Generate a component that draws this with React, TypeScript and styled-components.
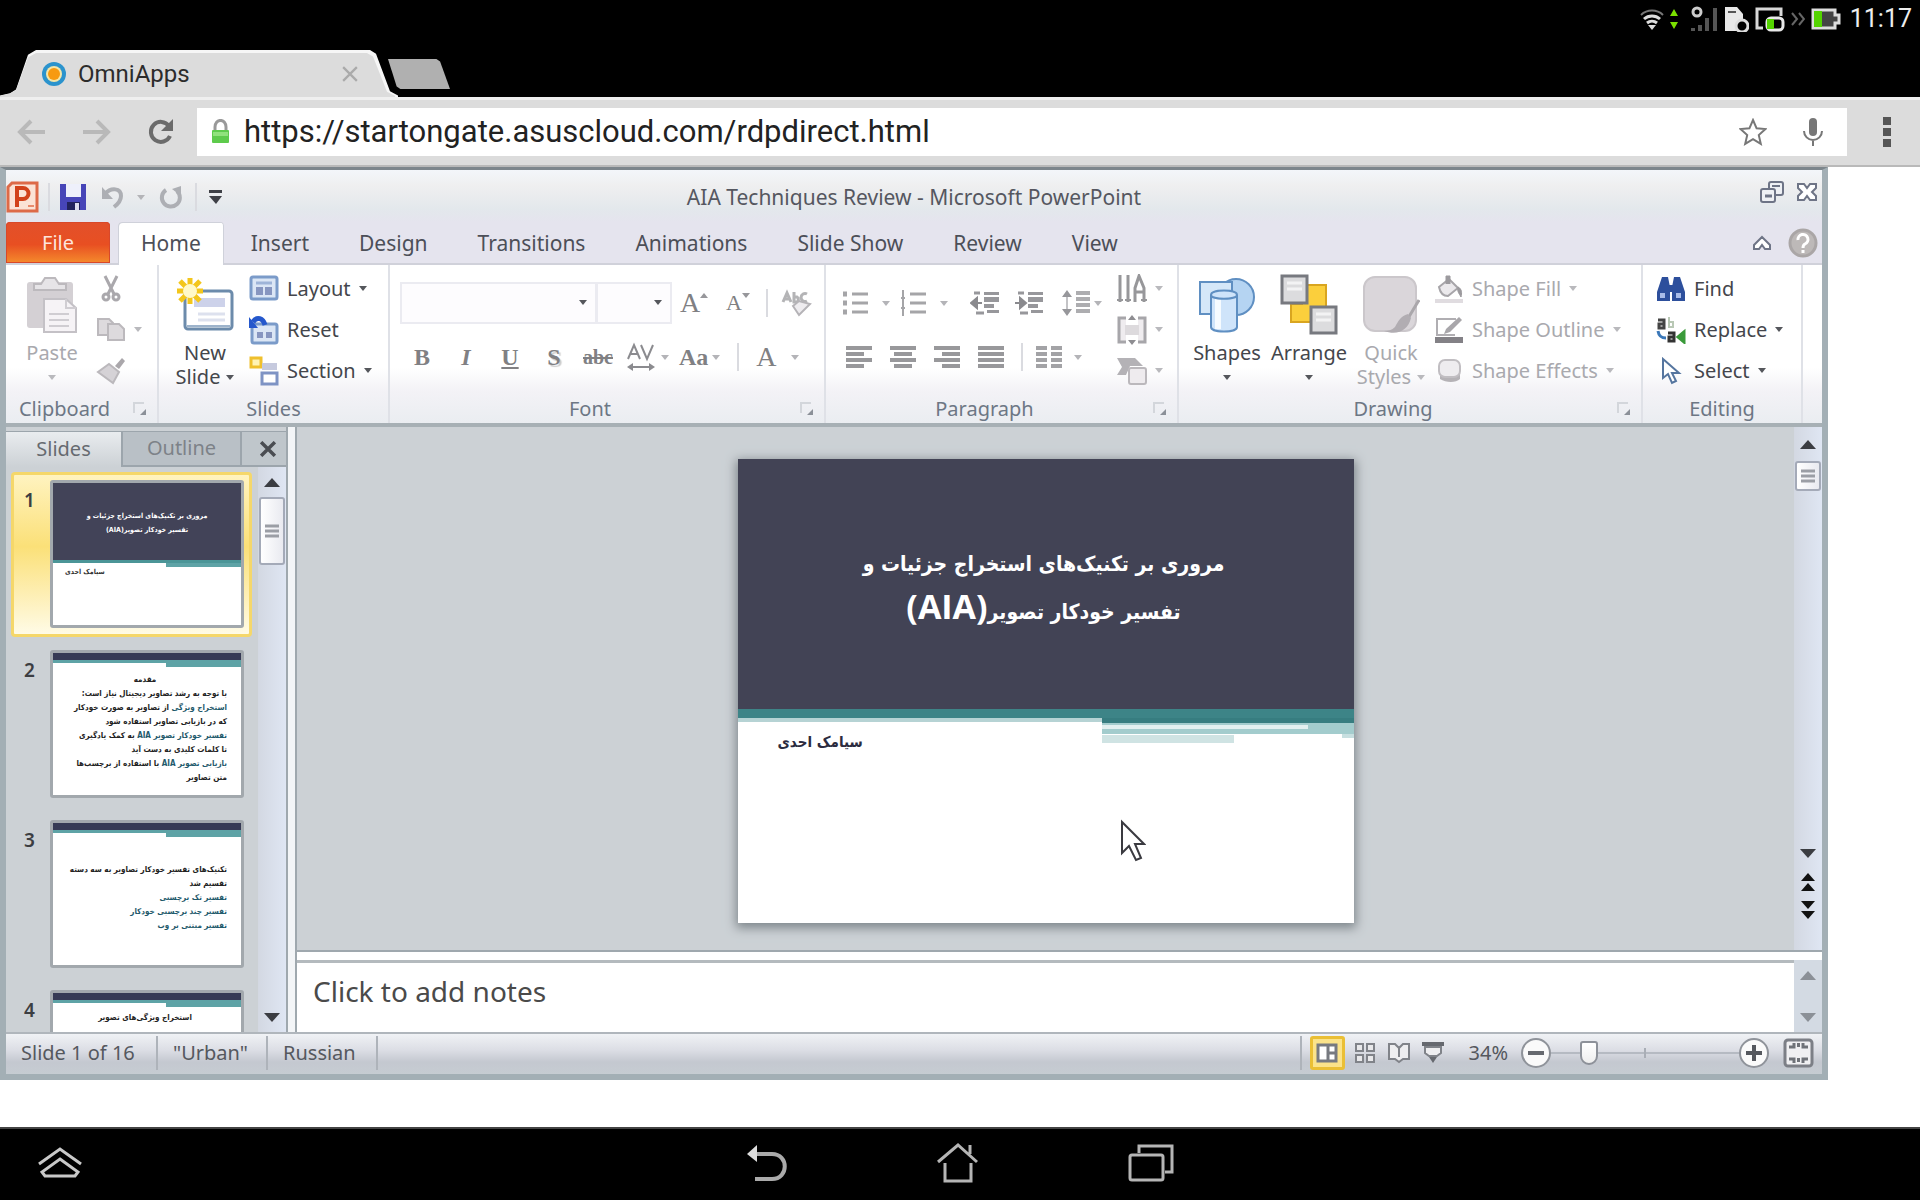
import React from "react";
import styled, { createGlobalStyle, css } from "styled-components";

const GlobalStyle = createGlobalStyle`
  *, *::before, *::after { box-sizing: border-box; }
  html, body { margin: 0; padding: 0; }
  body { background: #fff; font-family: "Noto Sans", "Open Sans", sans-serif; }
  button, input, select, textarea { font: inherit; color: inherit; margin: 0; padding: 0; border: 0; background: none; border-radius: 0; outline: none; }
  button { cursor: pointer; }
  svg { display: block; flex: none; }
`;

/* ---------- device frame ---------- */

const Screen = styled.div`
  height: 100vh;
  min-height: 900px;
  display: flex;
  flex-direction: column;
  background: #fff;
`;

const StatusBar = styled.div`
  height: 40px;
  flex: none;
  display: flex;
  justify-content: flex-end;
  align-items: center;
  gap: 6px;
  padding: 0 8px 2px 0;
  background: #000;
  color: #fff;
`;

const Signals = styled.div`
  display: flex;
  align-items: center;
  gap: 6px;
  margin-right: 6px;
`;

const Clock = styled.time`
  font: 400 25px/30px Roboto, sans-serif;
  color: #eee;
  margin-left: 2px;
`;

const TabStrip = styled.div`
  height: 57px;
  flex: none;
  display: flex;
  align-items: flex-end;
  background: #000;
`;

const tabShape = "polygon(0 100%, 0 97%, 10px 92%, 16px 84%, 28px 10%, 36px 0, calc(100% - 28px) 0, calc(100% - 22px) 8%, calc(100% - 8px) 88%, 100% 97%, 100% 100%)";

const BrowserTab = styled.div`
  position: relative;
  z-index: 0;
  width: 398px;
  height: 47px;
  display: flex;
  align-items: center;
  padding: 0 40px 0 42px;
  background: #f6f6f6;
  clip-path: ${tabShape};
  &::before {
    content: "";
    position: absolute;
    z-index: -1;
    inset: 3px 3px 0 0;
    background: #dcdcdc;
    clip-path: ${tabShape};
  }
`;

const TabTitle = styled.span`
  flex: 1;
  margin-left: 12px;
  font: 400 24px/28px Roboto, sans-serif;
  color: #2c2c2c;
`;

const PlainButton = styled.button`
  display: flex;
  align-items: center;
  justify-content: center;
`;

const NewTab = styled.button`
  width: 62px;
  height: 30px;
  margin: 0 0 8px -10px;
  background: #b0b0b0;
  clip-path: polygon(0 0, 78% 0, 84% 8%, 100% 100%, 20% 100%, 14% 92%);
`;

const BrowserBar = styled.div`
  height: 70px;
  flex: none;
  display: flex;
  align-items: center;
  gap: 36px;
  padding: 0 28px 2px 17px;
  background: #dcdcdc;
  border-top: 3px solid #efefef;
  border-bottom: 2px solid #b9b9b9;
`;

const NavButtons = styled.div`
  display: flex;
  gap: 36px;
`;

const UrlBox = styled.label`
  flex: 1;
  height: 48px;
  margin-left: -14px;
  padding: 0 20px 0 14px;
  display: flex;
  align-items: center;
  background: #fff;
`;

const UrlInput = styled.input`
  flex: 1;
  min-width: 0;
  margin-left: 14px;
  font: 400 31px/40px Roboto, sans-serif;
  color: #222;
`;

const UrlTools = styled.div`
  display: flex;
  gap: 32px;
`;

const Page = styled.main`
  flex: 1;
  min-height: 0;
  display: flex;
  padding: 0 92px 47px 0;
`;

const SystemNav = styled.nav`
  height: 73px;
  flex: none;
  display: grid;
  grid-template-columns: 1fr auto 1fr;
  align-items: center;
  padding: 0 36px 4px;
  background: #000;
  border-top: 2px solid #444;
`;

const SystemKeys = styled.div`
  display: flex;
  gap: 148px;
`;

/* ---------- office window ---------- */

const Office = styled.section`
  flex: 1;
  min-width: 0;
  display: flex;
  flex-direction: column;
  border: solid #a3afb5;
  border-width: 3px 6px 6px 6px;
  border-top-color: #7d868c;
  background: #ccd1d5;
  color: #4c4f58;
  font-size: 20px;
  line-height: 24px;
`;

const TitleBar = styled.header`
  height: 52px;
  flex: none;
  display: grid;
  grid-template-columns: 1fr auto 1fr;
  align-items: center;
  padding-top: 2px;
  background: linear-gradient(#f3f6fa, #efeff0 30%, #e3e8ec 75%, #e5e4ee);
`;

const QuickAccess = styled.div`
  display: flex;
  align-items: center;
  gap: 9px;
`;

const WindowTitle = styled.h1`
  margin: 0;
  font-size: 21px;
  font-weight: 400;
  line-height: 24px;
  color: #555760;
`;

const WindowButtons = styled.div`
  display: flex;
  justify-content: flex-end;
  align-items: center;
  gap: 12px;
  padding: 0 4px 10px 0;
`;

const TabRow = styled.div`
  height: 43px;
  flex: none;
  display: flex;
  gap: 4px;
  background: #e5e4ee;
  border-bottom: 2px solid #d0d1da;
`;

const FileTab = styled.button`
  width: 104px;
  height: 41px;
  margin-right: 4px;
  border-radius: 4px 4px 0 0;
  background: linear-gradient(#e2502b, #e84f22 55%, #f58b2c);
  box-shadow: inset 0 0 0 1px #d8482a;
  color: #fde5dc;
`;

const RibbonTab = styled.button<{ $active?: boolean }>`
  height: 43px;
  padding: 0 23px 2px;
  border-radius: 4px 4px 0 0;
  font-size: 21px;
  white-space: nowrap;
  ${(p) =>
    p.$active &&
    css`
      background: #fff;
      box-shadow: inset 1px 1px 0 #cfd1da, inset -1px 0 0 #cfd1da;
    `}
`;

const TabRowEnd = styled.div`
  margin-left: auto;
  display: flex;
  align-items: center;
  gap: 16px;
  padding-right: 4px;
`;

const Ribbon = styled.div`
  height: 162px;
  flex: none;
  display: flex;
  background: linear-gradient(#fff 0, #fff 65%, #f3f2f6 80%, #eaedf1);
  border-bottom: 4px solid #a7b0b5;
`;

const Group = styled.section<{ $w: number }>`
  flex: 0 0 ${(p) => p.$w}px;
  display: flex;
  flex-direction: column;
  border-right: 2px solid #dfe1e7;
`;

const GroupBody = styled.div<{ $left?: number }>`
  flex: 1;
  display: flex;
  align-items: flex-start;
  padding: 3px 0 0 ${(p) => p.$left ?? 0}px;
`;

const GroupFoot = styled.footer`
  height: 28px;
  display: flex;
  align-items: center;
  color: #6d7785;
  button { width: 34px; }
`;

const GroupName = styled.span`
  flex: 1;
  text-align: center;
  white-space: nowrap;
`;

const Big = styled.button<{ $w: number; $off?: boolean }>`
  width: ${(p) => p.$w}px;
  display: flex;
  flex-direction: column;
  align-items: center;
  color: ${(p) => (p.$off ? "#a9a9ae" : "#44464c")};
`;

const BigIcon = styled.span`
  height: 73px;
  display: flex;
  align-items: center;
`;

const BigLine = styled.span`
  height: 24px;
  display: flex;
  align-items: center;
  gap: 6px;
  white-space: nowrap;
`;

const Stack = styled.div<{ $left?: number }>`
  display: flex;
  flex-direction: column;
  padding-left: ${(p) => p.$left ?? 0}px;
`;

const Small = styled.button<{ $off?: boolean }>`
  height: 41px;
  display: flex;
  align-items: center;
  gap: 8px;
  white-space: nowrap;
  color: ${(p) => (p.$off ? "#a9a9ae" : "#44464c")};
`;

const SmallIcon = styled.span`
  width: 30px;
  display: flex;
  justify-content: center;
`;

const Rows = styled.div`
  padding-top: 8px;
`;

const ToolRow = styled.div`
  height: 54px;
  display: flex;
  align-items: center;
`;

const Tool = styled.button`
  width: 44px;
  height: 40px;
  display: flex;
  align-items: center;
  justify-content: center;
`;

const DropTool = styled.button<{ $gap?: number }>`
  height: 40px;
  padding: 0 5px;
  display: flex;
  align-items: center;
  gap: ${(p) => p.$gap ?? 4}px;
`;

const Rule = styled.span<{ $m?: number }>`
  width: 2px;
  height: 28px;
  margin: 0 ${(p) => p.$m ?? 6}px;
  background: #dadbe0;
`;

const IndentTools = styled.div`
  display: flex;
  margin: 0 6px 0 10px;
`;

const Raised = styled.span`
  align-self: flex-start;
  padding-top: 10px;
`;

const Picker = styled.label<{ $w: number }>`
  position: relative;
  width: ${(p) => p.$w}px;
  height: 42px;
  border: 2px solid #ebebf1;
  background: #fdfcfe;
  & + & { border-left-width: 1px; }
  select { width: 100%; height: 100%; appearance: none; }
  svg { position: absolute; right: 8px; top: 16px; pointer-events: none; }
`;

const Glyph = styled.span<{ $size?: number; $bold?: boolean; $italic?: boolean; $line?: string; $shadow?: boolean }>`
  font-family: "Liberation Serif", serif;
  font-size: ${(p) => p.$size ?? 24}px;
  line-height: 28px;
  font-weight: ${(p) => (p.$bold ? 700 : 400)};
  font-style: ${(p) => (p.$italic ? "italic" : "normal")};
  text-decoration: ${(p) => p.$line ?? "none"};
  text-shadow: ${(p) => (p.$shadow ? "2px 2px 1px #ccc" : "none")};
  color: #808083;
`;

/* ---------- work area ---------- */

const Work = styled.div`
  flex: 1;
  min-height: 0;
  display: flex;
`;

const SlidePane = styled.aside`
  flex: 0 0 280px;
  min-height: 0;
  display: flex;
  flex-direction: column;
  padding-top: 4px;
`;

const PaneTabs = styled.div`
  height: 36px;
  flex: none;
  display: flex;
`;

const PaneTab = styled.button<{ $on?: boolean; $w: number }>`
  width: ${(p) => p.$w}px;
  padding-bottom: 2px;
  color: ${(p) => (p.$on ? "#666a70" : "#7d8288")};
  background: ${(p) => (p.$on ? "linear-gradient(#e9ecef, #ccd1d5)" : "#b9c0c6")};
  border: solid #9ca5ac;
  border-width: ${(p) => (p.$on ? "1px 0 0 0" : "1px 0 2px 2px")};
`;

const PaneClose = styled.button`
  flex: 1;
  display: flex;
  align-items: center;
  justify-content: center;
  padding-left: 8px;
  background: #bfc6cb;
  border: solid #9ca5ac;
  border-width: 1px 0 2px 2px;
`;

const PaneBody = styled.div`
  flex: 1;
  min-height: 0;
  display: flex;
`;

const ThumbList = styled.ol`
  flex: 1;
  min-width: 0;
  min-height: 0;
  margin: 0;
  padding: 5px 6px 0 5px;
  list-style: none;
  overflow: hidden;
`;

const ThumbItem = styled.li<{ $on?: boolean }>`
  height: 165px;
  margin-bottom: 5px;
  padding: 8px 0 0 10px;
  display: flex;
  gap: 12px;
  border: 3px solid ${(p) => (p.$on ? "#f5d76a" : "transparent")};
  border-radius: 4px;
  background: ${(p) => (p.$on ? "linear-gradient(#fff3c0, #fbe078 45%, #fffbe6)" : "none")};
`;

const ThumbNumber = styled.span`
  flex: 0 0 14px;
  padding-top: 5px;
  font-size: 19px;
  font-weight: 600;
  color: #3c3e42;
`;

const Mini = styled.div`
  flex: 0 0 194px;
  height: 148px;
  margin-top: -3px;
  background: #fff;
  border: 3px solid #a2a8ad;
  border-radius: 3px;
  overflow: hidden;
  font-family: "DejaVu Sans Condensed", "DejaVu Sans", sans-serif;
`;

const MiniCover = styled.div`
  height: 80px;
  padding-top: 26px;
  background: #424358;
  border-bottom: 3px solid #4b9597;
  color: #fff;
  text-align: center;
  font-size: 7px;
  font-weight: 700;
  line-height: 14px;
`;

const MiniBar = styled.div`
  height: 10px;
  background: #363a55;
  border-bottom: 3px solid #5ea3a6;
`;

const MiniAccent = styled.div`
  width: 40%;
  height: 4px;
  margin-left: auto;
  background: #5ea3a6;
`;

const MiniName = styled.p`
  margin: 0 0 0 12px;
  font-size: 7px;
  font-weight: 700;
  line-height: 10px;
  color: #333;
`;

const MiniText = styled.div<{ $top: number }>`
  padding: ${(p) => p.$top}px 14px 0 10px;
  font-size: 8px;
  font-weight: 700;
  line-height: 14px;
  color: #222;
  white-space: nowrap;
  p { margin: 0; }
  b { color: #1f5a6c; }
`;

const MiniTitle = styled.p`
  text-align: center;
`;

const Scroll = styled.div`
  flex: 0 0 28px;
  display: flex;
  flex-direction: column;
  align-items: center;
  background: linear-gradient(90deg, #d3d8e2, #dfe6f3);
`;

const ScrollButton = styled.button<{ $h?: number }>`
  width: 100%;
  height: ${(p) => p.$h ?? 30}px;
  flex: none;
  display: flex;
  align-items: center;
  justify-content: center;
`;

const ScrollThumb = styled.div<{ $h: number }>`
  width: 26px;
  height: ${(p) => p.$h}px;
  display: flex;
  align-items: center;
  justify-content: center;
  border: 2px solid #a4aab8;
  border-radius: 3px;
  background: linear-gradient(90deg, #fff, #e9eaf0);
`;

const Spacer = styled.div`
  flex: 1;
`;

const Splitter = styled.div`
  flex: 0 0 11px;
  background: #f3f5f7;
  border: solid #9fa8ae;
  border-width: 0 2px 0 2px;
`;

const Main = styled.div`
  flex: 1;
  min-width: 0;
  display: flex;
  flex-direction: column;
`;

const Stage = styled.div`
  flex: 1;
  min-height: 0;
  display: flex;
`;

const Canvas = styled.div`
  flex: 1;
  display: flex;
  align-items: center;
  justify-content: center;
  padding-top: 4px;
`;

const Slide = styled.article`
  position: relative;
  width: 616px;
  height: 464px;
  background: #fff;
  box-shadow: 0 3px 10px 2px #7f878c;
`;

const Cover = styled.div`
  height: 250px;
  padding-top: 84px;
  background: #424355;
  text-align: center;
`;

const CoverTitle = styled.h2`
  margin: 0;
  padding-right: 4px;
  font: 700 21px/42px "DejaVu Sans Condensed", "DejaVu Sans", sans-serif;
  color: #fff;
  span { font: 700 34px/42px "Open Sans", sans-serif; }
`;

const Bands = styled.svg`
  width: 100%;
  height: 34px;
`;

const Author = styled.p`
  margin: -11px 0 0 40px;
  width: fit-content;
  font: 700 15px/20px "DejaVu Sans Condensed", "DejaVu Sans", sans-serif;
  color: #2c2c40;
`;

const Pointer = styled.svg`
  position: absolute;
  left: 382px;
  top: 360px;
`;

const Notes = styled.div`
  height: 82px;
  flex: none;
  display: flex;
  border-top: 2px solid #9fa8ae;
  background: #fff;
`;

const NotesBox = styled.textarea`
  flex: 1;
  height: 72px;
  margin-top: 8px;
  padding: 10px 16px;
  border-top: 3px solid #b4babe;
  resize: none;
  font: 400 28px/36px "Noto Sans", sans-serif;
  color: #4a4a4a;
  &::placeholder { color: #4a4a4a; opacity: 1; }
`;

const NotesScroll = styled(Scroll)`
  margin-top: 8px;
  justify-content: space-between;
  background: #d3dae3;
`;

const Foot = styled.footer`
  height: 42px;
  flex: none;
  display: flex;
  align-items: center;
  padding-bottom: 2px;
  border-top: 2px solid #b0b6bc;
  background: linear-gradient(#f0f2f5, #dcdee5 40%, #c4c8d0 70%, #c6ccd2);
  color: #55585e;
`;

const FootCell = styled.span<{ $w: number }>`
  width: ${(p) => p.$w}px;
  height: 34px;
  padding-left: 15px;
  display: flex;
  align-items: center;
  border-right: 2px solid #aeb3ba;
  white-space: nowrap;
`;

const ViewTools = styled.div`
  margin-left: auto;
  display: flex;
  align-items: center;
  gap: 6px;
  padding: 0 8px 0 8px;
  border-left: 2px solid #aeb3ba;
`;

const ViewButton = styled.button<{ $on?: boolean }>`
  width: ${(p) => (p.$on ? 35 : 28)}px;
  height: 34px;
  display: flex;
  align-items: center;
  justify-content: center;
  border-radius: 3px;
  ${(p) => p.$on && css`background: #fbe38a; border: 3px solid #eabf35;`}
`;

const ZoomLabel = styled.label`
  margin-left: 16px;
`;

const ZoomRange = styled.input`
  width: 188px;
  height: 30px;
  appearance: none;
  background:
    linear-gradient(#a9aeb6, #a9aeb6) center / 2px 10px no-repeat,
    linear-gradient(#b5bac2, #b5bac2) center / 100% 2px no-repeat;
  &::-webkit-slider-thumb {
    appearance: none;
    width: 18px;
    height: 24px;
    background: linear-gradient(#fff, #eee);
    border: 2px solid #8d9199;
    border-radius: 3px 3px 9px 9px;
  }
`;

const RoundButton = styled.button`
  width: 30px;
  height: 30px;
  display: flex;
  align-items: center;
  justify-content: center;
  border: 2px solid #8f939a;
  border-radius: 50%;
  background: #fafafa;
`;

const ZoomGroup = styled.div`
  display: flex;
  align-items: center;
  margin-left: 7px;
`;

const FitButton = styled(PlainButton)`
  margin-left: 14px;
`;

/* ---------- drawings ---------- */

const Caret = ({ c = "#55575c", up }: { c?: string; up?: boolean }) => (
  <svg width="8" height="5" viewBox="0 0 8 5"><path d={up ? "M0 5h8L4 0z" : "M0 0h8L4 5z"} fill={c} /></svg>
);

const Arrow = ({ down, c = "#3b3d42" }: { down?: boolean; c?: string }) => (
  <svg width="16" height="9" viewBox="0 0 16 9"><path d={down ? "M0 0h16L8 9z" : "M0 9h16L8 0z"} fill={c} /></svg>
);

const DoubleArrow = ({ down }: { down?: boolean }) => (
  <svg width="14" height="18" viewBox="0 0 14 18">
    <path d={down ? "M0 0h14L7 8zM0 10h14L7 18z" : "M0 18h14L7 10zM0 8h14L7 0z"} fill="#111" />
  </svg>
);

const Grip = () => (
  <svg width="14" height="14" viewBox="0 0 14 14"><path d="M0 2h14M0 7h14M0 12h14" stroke="#9b9ea5" strokeWidth="3" /></svg>
);

const Launcher = () => (
  <svg width="14" height="14" viewBox="0 0 14 14">
    <path d="M1 11V1h10" fill="none" stroke="#d3d6db" strokeWidth="2" />
    <path d="M13 7v6H7z" fill="#8b9098" />
  </svg>
);

const SystemIcons = () => (
  <>
    <Signals>
      <svg width="24" height="24" viewBox="0 0 24 24" fill="none" stroke="#ddd">
        <path d="M1 8a16 16 0 0 1 22 0" stroke="#777" strokeWidth="2" />
        <path d="M4 12a12 12 0 0 1 16 0M7 16a8 8 0 0 1 10 0" strokeWidth="3" />
        <path d="M8 18h8l-4 5z" fill="#ddd" stroke="none" />
      </svg>
      <svg width="8" height="22" viewBox="0 0 8 22" fill="#7be000"><path d="M0 8l4-7 4 7zM0 14h8l-4 7z" /></svg>
    </Signals>
    <svg width="28" height="26" viewBox="0 0 28 26">
      <circle cx="7" cy="6" r="4" fill="none" stroke="#ccc" strokeWidth="3" />
      <path d="M3 25v-3M10 25v-6M17 25V12M25 25V2" stroke="#555" strokeWidth="4" />
    </svg>
    <svg width="25" height="26" viewBox="0 0 25 26">
      <path d="M1 1h12l6 7v17H1z" fill="#e8e8e8" />
      <path d="M4 6h8" stroke="#555" strokeWidth="2" />
      <circle cx="18" cy="20" r="6" fill="#000" stroke="#ddd" strokeWidth="3" />
    </svg>
    <svg width="30" height="26" viewBox="0 0 30 26" fill="none">
      <path d="M8 22H2V3h24v7" stroke="#d8d8d8" strokeWidth="3" />
      <rect x="12" y="12" width="16" height="12" rx="4" stroke="#e8e8e8" strokeWidth="3" />
      <path d="M12 13h7v10h-7z" fill="#54d400" />
    </svg>
    <svg width="14" height="14" viewBox="0 0 14 14" fill="none" stroke="#666" strokeWidth="2"><path d="M1 1l5 6-5 6M8 1l5 6-5 6" /></svg>
    <svg width="31" height="22" viewBox="0 0 31 22">
      <path d="M2 2h22v5h4v8h-4v5H2z" fill="#444" stroke="#ddd" strokeWidth="3" />
      <path d="M3 3h8v16H3z" fill="#54d400" />
    </svg>
  </>
);

const Favicon = () => (
  <svg width="24" height="24" viewBox="0 0 24 24">
    <circle cx="12" cy="12" r="12" fill="#2b93cd" />
    <circle cx="12" cy="12" r="8" fill="#f4e6a8" />
    <circle cx="12" cy="12" r="6" fill="#f79a10" />
  </svg>
);

const Cross = ({ s = 14, c = "#999", w = 2 }: { s?: number; c?: string; w?: number }) => (
  <svg width={s} height={s} viewBox="0 0 14 14"><path d="M1 1l12 12M13 1L1 13" stroke={c} strokeWidth={w} /></svg>
);

const NavArrow = ({ right }: { right?: boolean }) => (
  <svg width="29" height="26" viewBox="0 0 29 26" fill="none" stroke="#b9b9b9" strokeWidth="4">
    <path d={right ? "M1 13h25M15 2l11 11-11 11" : "M28 13H3M14 2L3 13l11 11"} />
  </svg>
);

const Reload = () => (
  <svg width="28" height="28" viewBox="0 0 28 28">
    <path d="M22 8a10 10 0 1 0 1 10" fill="none" stroke="#6b6b6b" strokeWidth="4" />
    <path d="M26 1v12H14z" fill="#6b6b6b" />
  </svg>
);

const Lock = () => (
  <svg width="19" height="25" viewBox="0 0 19 25">
    <path d="M4 12V8a5 6 0 0 1 11 0v4" fill="none" stroke="#999" strokeWidth="3" />
    <rect x="1" y="11" width="17" height="13" rx="1" fill="#5ecb4c" />
    <path d="M2 13h15v4H2z" fill="#90e27c" />
  </svg>
);

const Star = () => (
  <svg width="28" height="28" viewBox="0 0 28 28">
    <path d="M14 2l3.600 8.300 8.900.8-6.700 6 2 8.800-7.800-4.700-7.800 4.700 2-8.800-6.700-6 8.900-.8z" fill="none" stroke="#777" strokeWidth="2" />
  </svg>
);

const Mic = () => (
  <svg width="28" height="28" viewBox="0 0 28 28">
    <rect x="10" y="0" width="8" height="18" rx="4" fill="#777" />
    <path d="M5 13a9 9 0 0 0 18 0M14 22v6" fill="none" stroke="#777" strokeWidth="2" />
  </svg>
);

const Dots = () => (
  <svg width="9" height="32" viewBox="0 0 9 32" fill="#555"><path d="M0 1h8v8H0zM0 12h8v8H0zM0 23h8v8H0z" /></svg>
);

const PptLogo = () => (
  <svg width="33" height="32" viewBox="0 0 33 32">
    <path d="M6 2h25v28H2V6z" fill="#fbe3d6" stroke="#dd6a48" strokeWidth="3" />
    <path d="M11 26V7h6a5 5 0 0 1 0 11h-5" fill="none" stroke="#d2421a" strokeWidth="4" />
    <path d="M22 25h6" stroke="#e88b6d" strokeWidth="2" />
  </svg>
);

const Save = () => (
  <svg width="28" height="28" viewBox="0 0 28 28">
    <path d="M1 1h26v26H1z" fill="#4745b8" />
    <path d="M7 1h15v13H7z" fill="#eef0fb" />
    <path d="M8 19h13v8H8z" fill="#22225c" /><path d="M16 20h4v7h-4z" fill="#dde" />
  </svg>
);

const Undo = () => (
  <svg width="24" height="24" viewBox="0 0 24 24">
    <path d="M4 9C10 2 20 3 20 11c0 5-3 8-7 11" fill="none" stroke="#adafb4" strokeWidth="4" />
    <path d="M1 2v12h11z" fill="#adafb4" />
  </svg>
);

const Redo = () => (
  <svg width="24" height="24" viewBox="0 0 24 24">
    <path d="M7 5a9 9 0 1 0 11 1" fill="none" stroke="#adafb4" strokeWidth="4" />
    <path d="M22 1v10l-9-7z" fill="#adafb4" />
  </svg>
);

const Customize = () => (
  <svg width="13" height="14" viewBox="0 0 13 14"><path d="M0 0h13v3H0zM0 6h13l-6 8z" fill="#3e4046" /></svg>
);

const Restore = () => (
  <svg width="24" height="22" viewBox="0 0 24 22" fill="#eef0f4" stroke="#6e7486" strokeWidth="2">
    <rect x="9" y="1" width="14" height="13" rx="2" /><path d="M12 5h8" />
    <rect x="1" y="8" width="14" height="13" rx="2" /><path d="M5 15h7" strokeWidth="3" />
  </svg>
);

const CloseBox = () => (
  <svg width="22" height="20" viewBox="0 0 22 20">
    <path d="M2 2h6l3 4 3-4h6v4l-4 4 4 4v4h-6l-3-4-3 4H2v-4l4-4-4-4z" fill="#fff" stroke="#6e7486" strokeWidth="2" />
  </svg>
);

const Collapse = () => (
  <svg width="20" height="16" viewBox="0 0 20 16">
    <path d="M10 2l8 8v4h-5l-3-4-3 4H2v-4z" fill="#fff" stroke="#6e7486" strokeWidth="2" />
  </svg>
);

const Help = () => (
  <svg width="30" height="30" viewBox="0 0 30 30">
    <circle cx="15" cy="15" r="13" fill="#bdb9b8" stroke="#aaa6a6" strokeWidth="3" />
    <path d="M10 12a5 5 0 1 1 7 4c-2 1-2 2-2 4M15 22v3" fill="none" stroke="#fff" strokeWidth="3" />
  </svg>
);

const PasteIcon = () => (
  <svg width="52" height="58" viewBox="0 0 52 58">
    <rect x="1" y="6" width="46" height="46" rx="3" fill="#d4d0d4" />
    <path d="M8 8h7l4-6h10l4 6h7v6H8z" fill="#e6e4e7" stroke="#bcb9bd" strokeWidth="2" />
    <path d="M18 23h22l10 9v24H18z" fill="#f6f3f6" stroke="#c4c1c6" strokeWidth="2" />
    <path d="M40 23v9h10M23 38h20M23 44h20M23 50h20" fill="none" stroke="#d0cdd2" strokeWidth="2" />
  </svg>
);

const Cut = () => (
  <svg width="20" height="28" viewBox="0 0 20 28" fill="none" stroke="#aaa8ac" strokeWidth="3">
    <path d="M4 1l9 18M16 1L7 19" /><circle cx="5" cy="22" r="3" /><circle cx="15" cy="22" r="3" />
  </svg>
);

const Copy = () => (
  <svg width="30" height="25" viewBox="0 0 30 25" fill="#dddadd" stroke="#bcb9bd" strokeWidth="2">
    <path d="M2 2h11l4 4v12H2z" /><path d="M12 7h11l5 5v11H12z" />
  </svg>
);

const Brush = () => (
  <svg width="30" height="28" viewBox="0 0 30 28">
    <path d="M19 9l7-8 3 3-6 8z" fill="#aaa7ab" /><path d="M13 7l10 8-6 11L2 15z" fill="#d5d2d6" stroke="#bbb8bc" strokeWidth="2" />
  </svg>
);

const NewSlideIcon = () => (
  <svg width="58" height="54" viewBox="0 0 58 54">
    <rect x="9" y="13" width="47" height="38" rx="3" fill="#fff" stroke="#6c8bab" strokeWidth="3" />
    <path d="M18 20h31v9H18z" fill="#cdd2ea" /><path d="M22 36h27M22 42h27" stroke="#dde1ee" strokeWidth="3" />
    <path d="M11 48h43" stroke="#9db3cb" strokeWidth="2" />
    <path d="M14 0v26M1 13h26M4 3l20 20M24 3L4 23" stroke="#f3c61c" strokeWidth="5" />
    <circle cx="14" cy="13" r="7" fill="#fff9c8" />
  </svg>
);

const LayoutIcon = () => (
  <svg width="30" height="28" viewBox="0 0 30 28">
    <rect x="2" y="2" width="26" height="22" rx="2" fill="#dbe6f5" stroke="#7b9bc9" strokeWidth="3" />
    <path d="M7 8h16" stroke="#9eb4d8" strokeWidth="3" /><path d="M7 12h7v8H7zM16 12h7v8h-7z" fill="#8796c0" />
  </svg>
);

const ResetIcon = () => (
  <svg width="30" height="30" viewBox="0 0 30 30">
    <rect x="3" y="9" width="25" height="19" rx="2" fill="#dbe6f5" stroke="#7b9bc9" strokeWidth="3" />
    <path d="M8 17h6v6H8zM17 17h6v6h-6z" fill="#8796c0" />
    <path d="M4 7C8 1 14 3 16 10" fill="none" stroke="#2558cc" strokeWidth="5" /><path d="M0 2v11h9z" fill="#2558cc" />
  </svg>
);

const SectionIcon = () => (
  <svg width="30" height="30" viewBox="0 0 30 30">
    <rect x="2" y="2" width="10" height="9" fill="#fff3b4" stroke="#efc02d" strokeWidth="3" />
    <rect x="13" y="7" width="15" height="7" fill="#c6cade" /><rect x="13" y="17" width="15" height="11" fill="#fff" stroke="#7e93c4" strokeWidth="3" />
  </svg>
);

const ClearFormat = () => (
  <svg width="32" height="28" viewBox="0 0 32 28">
    <path d="M3 13l4-9 4 9M5 10h4M14 3v10h3a3 3 0 0 0 0-5h-3M27 5a4 4 0 1 0 0 7" fill="none" stroke="#b4b4b6" strokeWidth="3" />
    <path d="M13 17l6-5 11 3-11 11z" fill="#eeecef" stroke="#b5b3b7" strokeWidth="2" />
  </svg>
);

const SpacingIcon = () => (
  <svg width="32" height="30" viewBox="0 0 32 30" fill="none" stroke="#8b8b8f">
    <path d="M3 17l6-14 6 14M6 12h6M16 3l6 14 6-14" strokeWidth="2" />
    <path d="M4 25h24" strokeWidth="2" /><path d="M8 21l-6 4 6 4zM24 21l6 4-6 4z" fill="#8b8b8f" stroke="none" />
  </svg>
);

const ListIcon = ({ numbered }: { numbered?: boolean }) => (
  <svg width="26" height="26" viewBox="0 0 26 26" stroke="#a5a5a8" strokeWidth="3">
    <path d="M10 4h16M10 13h16M10 22h16" />
    <path d={numbered ? "M3 0v26M1 8h4M1 18h4" : "M1 4h4M1 13h4M1 22h4"} strokeWidth={numbered ? 2 : 5} fill="none" />
  </svg>
);

const IndentIcon = ({ out }: { out?: boolean }) => (
  <svg width="30" height="26" viewBox="0 0 30 26">
    <path d="M4 3h6M6 23h8" stroke="#97979b" strokeWidth="3" />
    <path d="M14 2h15v3H14zM14 7h15v5H14zM14 14h10v4H14zM17 20h12v3H17z" fill="#97979b" />
    <path d={out ? "M1 13l6-5v10zM7 13h5" : "M12 13L6 8v10zM1 13h6"} fill="#8a8a8e" stroke="#8a8a8e" strokeWidth="2" />
  </svg>
);

const LineSpacing = () => (
  <svg width="28" height="28" viewBox="0 0 28 28">
    <path d="M0 8l5-7 5 7zM0 20l5 7 5-7z" fill="#97979b" /><path d="M5 8v12" stroke="#c3c3c6" strokeWidth="2" />
    <path d="M14 4h14M14 10h14M14 16h14M14 22h14" stroke="#adadb0" strokeWidth="4" />
  </svg>
);

const widths: Record<string, [number, number][]> = {
  left: [[0, 26], [0, 18], [0, 26], [0, 18]],
  center: [[0, 26], [4, 22], [0, 26], [4, 22]],
  right: [[0, 26], [8, 26], [0, 26], [8, 26]],
  justify: [[0, 26], [0, 26], [0, 26], [0, 26]],
};

const AlignIcon = ({ kind }: { kind: string }) => (
  <svg width="26" height="24" viewBox="0 0 26 24" stroke="#98989b" strokeWidth="4">
    {widths[kind].map(([a, b], i) => <path key={i} d={`M${a} ${3 + i * 6}H${b}`} />)}
  </svg>
);

const Columns = () => (
  <svg width="26" height="24" viewBox="0 0 26 24" stroke="#a3a3a6" strokeWidth="4">
    <path d="M0 3h11M0 9h11M0 15h11M0 21h11M15 3h11M15 9h11M15 15h11M15 21h11" />
  </svg>
);

const TextDirection = () => (
  <svg width="30" height="30" viewBox="0 0 30 30" fill="none" stroke="#97979a" strokeWidth="3">
    <path d="M3 1v27M11 1v27M18 28V14l4-12 5 12v14M18 18h9" /><path d="M0 26h6M8 26h6M24 26h6" strokeWidth="2" />
  </svg>
);

const AlignText = () => (
  <svg width="30" height="30" viewBox="0 0 30 30">
    <path d="M9 3H2v24h7M21 3h7v24h-7" fill="#efecef" stroke="#a7a6aa" strokeWidth="3" />
    <path d="M8 10h14v10H8z" fill="#dddadd" /><path d="M11 5l4-5 4 5zM11 25l4 5 4-5z" fill="#8e8d91" />
  </svg>
);

const SmartArt = () => (
  <svg width="30" height="30" viewBox="0 0 30 30">
    <path d="M0 2h18l8 8H13l-4 9H0l5-8z" fill="#b4b2b6" /><rect x="12" y="12" width="17" height="16" rx="2" fill="#eeebee" stroke="#bbb8bc" strokeWidth="2" />
  </svg>
);

const ShapesIcon = () => (
  <svg width="58" height="58" viewBox="0 0 58 58" stroke="#5f8fc2" strokeWidth="2">
    <circle cx="38" cy="21" r="18" fill="#b5d4f2" /><rect x="2" y="6" width="32" height="32" fill="#d5e7f8" />
    <path d="M13 19c0-6 26-6 26 0v32c0 6-26 6-26 0z" fill="#cfe4fa" />
    <path d="M20 22v31" stroke="#f6fbff" strokeWidth="6" /><path d="M13 19c0 5 26 5 26 0" fill="none" />
  </svg>
);

const ArrangeIcon = () => (
  <svg width="58" height="62" viewBox="0 0 58 62">
    <path d="M22 11h24v23H34v14H11V30h11z" fill="#fbcf3c" stroke="#d9a520" strokeWidth="2" />
    <rect x="2" y="2" width="25" height="27" fill="#dcdcde" stroke="#77797f" strokeWidth="3" /><rect x="31" y="33" width="25" height="26" fill="#dcdcde" stroke="#77797f" strokeWidth="3" />
    <path d="M7 9h15M7 15h15M36 40h15M36 46h15" stroke="#f3f3f4" strokeWidth="3" />
  </svg>
);

const QuickIcon = () => (
  <svg width="58" height="58" viewBox="0 0 58 58">
    <rect x="2" y="1" width="52" height="54" rx="11" fill="#dad6da" stroke="#cbc7cb" strokeWidth="2" />
    <path d="M57 24L45 44" stroke="#aaa7ab" strokeWidth="3" /><path d="M46 38c-8 2-10 8-13 13-3 3-7 4-11 4 14 5 24-1 27-13z" fill="#b1adb2" />
  </svg>
);

const FillIcon = () => (
  <svg width="30" height="28" viewBox="0 0 30 28">
    <path d="M5 12L15 4l9 9-10 8c-5 0-8-4-9-9z" fill="#ebe9ec" stroke="#a7a5a9" strokeWidth="2" />
    <path d="M12 9V1h4v8M24 12c4 2 4 6 3 10-2-4-4-5-3-10z" fill="#9c9a9e" stroke="#9c9a9e" /><path d="M1 26h28" stroke="#e0dce0" strokeWidth="4" />
  </svg>
);

const OutlineIcon = () => (
  <svg width="30" height="28" viewBox="0 0 30 28">
    <path d="M22 3H3v16h18" fill="none" stroke="#b0aeb2" strokeWidth="2" /><path d="M10 18l2-5L25 1l3 3-12 12z" fill="#a8a6aa" />
    <path d="M1 24h28" stroke="#838186" strokeWidth="6" />
  </svg>
);

const EffectsIcon = () => (
  <svg width="30" height="26" viewBox="0 0 30 26">
    <path d="M6 12h20v9c-4 4-14 4-20 0z" fill="#b5b2b6" /><rect x="5" y="2" width="21" height="17" rx="6" fill="#eeecef" stroke="#c1bec2" strokeWidth="2" />
  </svg>
);

const FindIcon = () => (
  <svg width="30" height="26" viewBox="0 0 30 26" fill="#2d4f9c">
    <path d="M6 1h6l2 10v14H1V16zM18 1h6l5 15v9H16V11z" /><path d="M12 9h6v7h-6z" /><path d="M4 17h5v5H4zM20 17h5v5h-5z" fill="#a9bce8" />
  </svg>
);

const ReplaceIcon = () => (
  <svg width="30" height="28" viewBox="0 0 30 28" fill="none" strokeWidth="3">
    <path d="M2 4h6v8H3V8h5" stroke="#444" /><path d="M13 1v10h4V6h-4" stroke="#b9c8b5" strokeWidth="2" />
    <path d="M2 15c1 6 4 7 8 7" stroke="#3a77b8" /><path d="M12 17h6v8h-5v-4h5" stroke="#333" /><path d="M28 16l-6 5 6 5z" fill="#3a9a3a" stroke="#3a9a3a" />
  </svg>
);

const SelectIcon = () => (
  <svg width="22" height="28" viewBox="0 0 22 28"><path d="M3 2v19l5-4 4 9 4-2-4-8h7z" fill="#fff" stroke="#55759f" strokeWidth="2" /></svg>
);

const BandArt = () => (
  <Bands viewBox="0 0 616 34" preserveAspectRatio="none" aria-hidden="true">
    <path d="M0 0h616v9H0z" fill="#3d8487" /><path d="M0 9h364v4H0z" fill="#b6d3d4" />
    <path d="M364 9h252v5H364z" fill="#377d80" /><path d="M364 14h252v11H364z" fill="#a3cccd" />
    <path d="M364 16h206v4H364z" fill="#e3f0f0" />
    <path d="M364 26h132v8H364z" fill="#cfe3e3" /><path d="M604 25h12v4h-12z" fill="#c7dfe0" />
  </Bands>
);

const viewIcons = {
  normal: <svg width="22" height="20" viewBox="0 0 22 20" fill="#fff" stroke="#777a80" strokeWidth="3"><path d="M2 2h18v16H2zM12 2v16M12 10h8" /></svg>,
  sorter: <svg width="22" height="20" viewBox="0 0 22 20" fill="#e8e8ea" stroke="#808389" strokeWidth="2"><path d="M2 1h7v7H2zM13 1h7v7h-7zM2 12h7v7H2zM13 12h7v7h-7z" /></svg>,
  reading: <svg width="24" height="22" viewBox="0 0 24 22" fill="#eeeef0" stroke="#808389" strokeWidth="2"><path d="M2 2h6l4 4 4-4h6v15h-6l-4 3-4-3H2zM12 6v9" /></svg>,
  show: <svg width="24" height="22" viewBox="0 0 24 22"><path d="M1 2h22" stroke="#66696f" strokeWidth="4" /><path d="M4 5h16v6l-4 3H8l-4-3z" fill="#eeeef0" stroke="#808389" strokeWidth="2" /><path d="M8 15h8l-4 6z" fill="#66696f" /></svg>,
};

const FitIcon = () => (
  <svg width="31" height="30" viewBox="0 0 31 30">
    <rect x="2" y="2" width="27" height="26" rx="3" fill="#f0f0f2" stroke="#7c7f86" strokeWidth="3" />
    <path d="M6 9h5V5M25 9h-5V5M6 21h5v4M25 21h-5v4" fill="none" stroke="#6f7278" strokeWidth="3" />
    <path d="M14 5h3v4h-3zM14 20h3v4h-3z" fill="#6f7278" />
  </svg>
);

const KeyIcons = {
  up: <svg width="48" height="32" viewBox="0 0 48 32" fill="none" stroke="#c9c9c9" strokeWidth="3"><path d="M3 17L24 2l21 15" /><path d="M24 12l18 13-3 4H9l-3-4z" /></svg>,
  back: <svg width="42" height="40" viewBox="0 0 42 40"><path d="M9 11h17c17 0 17 25 0 25H9" fill="none" stroke="#aaa" strokeWidth="4" /><path d="M11 2v17L1 11z" fill="#ddd" /></svg>,
  home: <svg width="44" height="42" viewBox="0 0 44 42" fill="none" stroke="#b5b5b5" strokeWidth="3"><path d="M2 20L22 3l19 17M9 21v18h26V21M34 12V3" /></svg>,
  recent: <svg width="46" height="38" viewBox="0 0 46 38" fill="none" stroke="#b5b5b5" strokeWidth="3"><rect x="2" y="11" width="33" height="25" rx="2" /><path d="M11 9V2h33v26h-7" /></svg>,
};

/* ---------- composed parts ---------- */

const RibbonGroup = ({ name, w, left, launcher, children }: { name: string; w: number; left?: number; launcher?: boolean; children: React.ReactNode }) => (
  <Group $w={w} aria-label={name}>
    <GroupBody $left={left}>{children}</GroupBody>
    <GroupFoot>
      <GroupName>{name}</GroupName>
      {launcher && <PlainButton aria-label={`${name} options`}><Launcher /></PlainButton>}
    </GroupFoot>
  </Group>
);

const BigButton = ({ icon, lines, caret, w, off }: { icon: React.ReactNode; lines: string[]; caret?: "end" | "below"; w: number; off?: boolean }) => (
  <Big $w={w} $off={off}>
    <BigIcon>{icon}</BigIcon>
    {lines.map((t, i) => (
      <BigLine key={t}>{t}{caret === "end" && i === lines.length - 1 && <Caret c={off ? "#b9b9bd" : undefined} />}</BigLine>
    ))}
    {caret === "below" && <BigLine><Caret c={off ? "#b9b9bd" : undefined} /></BigLine>}
  </Big>
);

const SmallButton = ({ icon, text, label, caret, off }: { icon: React.ReactNode; text?: string; label?: string; caret?: boolean; off?: boolean }) => (
  <Small $off={off} aria-label={label}>
    <SmallIcon>{icon}</SmallIcon>{text}{caret && <Caret c={off ? "#b9b9bd" : undefined} />}
  </Small>
);

const light = "#b4b4b8";

export default function App() {
  return (
    <>
      <GlobalStyle />
      <Screen>
        <StatusBar><SystemIcons /><Clock>11:17</Clock></StatusBar>
        <TabStrip>
          <BrowserTab>
            <Favicon /><TabTitle>OmniApps</TabTitle>
            <PlainButton aria-label="Close tab"><Cross s={16} c="#aaa" /></PlainButton>
          </BrowserTab>
          <NewTab aria-label="New tab" />
        </TabStrip>
        <BrowserBar>
          <NavButtons>
            <PlainButton aria-label="Back"><NavArrow /></PlainButton>
            <PlainButton aria-label="Forward"><NavArrow right /></PlainButton>
            <PlainButton aria-label="Reload"><Reload /></PlainButton>
          </NavButtons>
          <UrlBox>
            <Lock />
            <UrlInput type="text" aria-label="Address" defaultValue="https://startongate.asuscloud.com/rdpdirect.html" />
            <UrlTools>
              <PlainButton aria-label="Bookmark"><Star /></PlainButton>
              <PlainButton aria-label="Voice search"><Mic /></PlainButton>
            </UrlTools>
          </UrlBox>
          <PlainButton aria-label="Menu"><Dots /></PlainButton>
        </BrowserBar>

        <Page>
          <Office>
            <TitleBar>
              <QuickAccess>
                <PptLogo /><Rule $m={0} />
                <PlainButton aria-label="Save"><Save /></PlainButton>
                <DropTool $gap={12} aria-label="Undo"><Undo /><Caret c={light} /></DropTool>
                <PlainButton aria-label="Redo"><Redo /></PlainButton>
                <Rule $m={3} />
                <PlainButton aria-label="Customize toolbar"><Customize /></PlainButton>
              </QuickAccess>
              <WindowTitle>AIA Techniques Review - Microsoft PowerPoint</WindowTitle>
              <WindowButtons>
                <PlainButton aria-label="Restore"><Restore /></PlainButton>
                <PlainButton aria-label="Close"><CloseBox /></PlainButton>
              </WindowButtons>
            </TitleBar>
            <TabRow>
              <FileTab>File</FileTab>
              {["Home", "Insert", "Design", "Transitions", "Animations", "Slide Show", "Review", "View"].map((t) => (
                <RibbonTab key={t} $active={t === "Home"}>{t}</RibbonTab>
              ))}
              <TabRowEnd>
                <PlainButton aria-label="Collapse ribbon"><Collapse /></PlainButton>
                <PlainButton aria-label="Help"><Help /></PlainButton>
              </TabRowEnd>
            </TabRow>
            <Ribbon>
              <RibbonGroup name="Clipboard" w={153} left={4} launcher>
                <BigButton icon={<PasteIcon />} lines={["Paste"]} caret="below" w={84} off />
                <Stack $left={2}>
                  <SmallButton icon={<Cut />} label="Cut" off />
                  <SmallButton icon={<Copy />} label="Copy" caret off />
                  <SmallButton icon={<Brush />} label="Format painter" off />
                </Stack>
              </RibbonGroup>
              <RibbonGroup name="Slides" w={231} left={4}>
                <BigButton icon={<NewSlideIcon />} lines={["New", "Slide"]} caret="end" w={84} />
                <Stack $left={2}>
                  <SmallButton icon={<LayoutIcon />} text="Layout" caret />
                  <SmallButton icon={<ResetIcon />} text="Reset" />
                  <SmallButton icon={<SectionIcon />} text="Section" caret />
                </Stack>
              </RibbonGroup>
              <RibbonGroup name="Font" w={436} left={10} launcher>
                <Rows>
                  <ToolRow>
                    <Picker $w={197}><select aria-label="Font name" /><Caret /></Picker>
                    <Picker $w={75}><select aria-label="Font size" /><Caret /></Picker>
                    <Tool aria-label="Grow font"><Glyph $size={28}>A</Glyph><Raised><Caret up c="#97979b" /></Raised></Tool>
                    <Tool aria-label="Shrink font"><Glyph $size={22}>A</Glyph><Raised><Caret c="#97979b" /></Raised></Tool>
                    <Rule />
                    <Tool aria-label="Clear formatting"><ClearFormat /></Tool>
                  </ToolRow>
                  <ToolRow>
                    <Tool><Glyph $bold>B</Glyph></Tool>
                    <Tool><Glyph $bold $italic>I</Glyph></Tool>
                    <Tool><Glyph $bold $line="underline">U</Glyph></Tool>
                    <Tool><Glyph $bold $shadow>S</Glyph></Tool>
                    <Tool><Glyph $size={20} $bold $line="line-through">abc</Glyph></Tool>
                    <DropTool aria-label="Character spacing"><SpacingIcon /><Caret c={light} /></DropTool>
                    <DropTool><Glyph $bold>Aa</Glyph><Caret c={light} /></DropTool>
                    <Rule $m={12} />
                    <DropTool $gap={14}><Glyph $size={28}>A</Glyph><Caret c={light} /></DropTool>
                  </ToolRow>
                </Rows>
              </RibbonGroup>
              <RibbonGroup name="Paragraph" w={353} left={11} launcher>
                <Rows>
                  <ToolRow>
                    <DropTool $gap={14} aria-label="Bullets"><ListIcon /><Caret c={light} /></DropTool>
                    <DropTool $gap={14} aria-label="Numbering"><ListIcon numbered /><Caret c={light} /></DropTool>
                    <IndentTools>
                      <Tool aria-label="Decrease indent"><IndentIcon out /></Tool>
                      <Tool aria-label="Increase indent"><IndentIcon /></Tool>
                    </IndentTools>
                    <DropTool aria-label="Line spacing"><LineSpacing /><Caret c={light} /></DropTool>
                  </ToolRow>
                  <ToolRow>
                    {["left", "center", "right", "justify"].map((k) => (
                      <Tool key={k} aria-label={`Align ${k}`}><AlignIcon kind={k} /></Tool>
                    ))}
                    <Rule $m={8} />
                    <DropTool $gap={12} aria-label="Columns"><Columns /><Caret c={light} /></DropTool>
                  </ToolRow>
                </Rows>
                <Stack $left={10}>
                  <SmallButton icon={<TextDirection />} label="Text direction" caret off />
                  <SmallButton icon={<AlignText />} label="Align text" caret off />
                  <SmallButton icon={<SmartArt />} label="Convert to SmartArt" caret off />
                </Stack>
              </RibbonGroup>
              <RibbonGroup name="Drawing" w={464} left={7} launcher>
                <BigButton icon={<ShapesIcon />} lines={["Shapes"]} caret="below" w={82} />
                <BigButton icon={<ArrangeIcon />} lines={["Arrange"]} caret="below" w={82} />
                <BigButton icon={<QuickIcon />} lines={["Quick", "Styles"]} caret="end" w={82} off />
                <Stack $left={2}>
                  <SmallButton icon={<FillIcon />} text="Shape Fill" caret off />
                  <SmallButton icon={<OutlineIcon />} text="Shape Outline" caret off />
                  <SmallButton icon={<EffectsIcon />} text="Shape Effects" caret off />
                </Stack>
              </RibbonGroup>
              <RibbonGroup name="Editing" w={160} left={13}>
                <Stack>
                  <SmallButton icon={<FindIcon />} text="Find" />
                  <SmallButton icon={<ReplaceIcon />} text="Replace" caret />
                  <SmallButton icon={<SelectIcon />} text="Select" caret />
                </Stack>
              </RibbonGroup>
            </Ribbon>

            <Work>
              <SlidePane>
                <PaneTabs>
                  <PaneTab $on $w={115}>Slides</PaneTab>
                  <PaneTab $w={119}>Outline</PaneTab>
                  <PaneClose aria-label="Close pane"><Cross s={16} c="#4a4d52" w={3} /></PaneClose>
                </PaneTabs>
                <PaneBody>
                  <ThumbList>
                    <ThumbItem $on>
                      <ThumbNumber>1</ThumbNumber>
                      <Mini>
                        <MiniCover dir="rtl">مروری بر تکنیک‌های استخراج جزئیات و<br />تفسیر خودکار تصویر(AIA)</MiniCover>
                        <MiniAccent /><MiniName>سیامک احدی</MiniName>
                      </Mini>
                    </ThumbItem>
                    <ThumbItem>
                      <ThumbNumber>2</ThumbNumber>
                      <Mini>
                        <MiniBar /><MiniAccent />
                        <MiniText $top={6} dir="rtl">
                          <MiniTitle>مقدمه</MiniTitle>
                          <p>با توجه به رشد تصاویر دیجیتال نیاز است:</p>
                          <p><b>استخراج ویژگی</b> از تصاویر به صورت خودکار</p>
                          <p>که در بازیابی تصاویر استفاده شود</p>
                          <p><b>تفسیر خودکار تصویر AIA</b> به کمک یادگیری</p>
                          <p>تا کلمات کلیدی به دست آید</p>
                          <p><b>بازیابی تصویر AIA</b> با استفاده از برچسب‌ها</p>
                          <p>متن تصاویر</p>
                        </MiniText>
                      </Mini>
                    </ThumbItem>
                    <ThumbItem>
                      <ThumbNumber>3</ThumbNumber>
                      <Mini>
                        <MiniBar /><MiniAccent />
                        <MiniText $top={26} dir="rtl">
                          <p>تکنیک‌های تفسیر خودکار تصاویر به سه دسته</p>
                          <p>تقسیم شد</p>
                          <p><b>تفسیر تک برچسبی</b></p>
                          <p><b>تفسیر چند برچسبی خودکار</b></p>
                          <p><b>تفسیر مبتنی بر وب</b></p>
                        </MiniText>
                      </Mini>
                    </ThumbItem>
                    <ThumbItem>
                      <ThumbNumber>4</ThumbNumber>
                      <Mini>
                        <MiniBar /><MiniAccent />
                        <MiniText $top={4} dir="rtl"><MiniTitle>استخراج ویژگی‌های تصویر</MiniTitle></MiniText>
                      </Mini>
                    </ThumbItem>
                  </ThumbList>
                  <Scroll>
                    <ScrollButton aria-label="Scroll up"><Arrow /></ScrollButton>
                    <ScrollThumb $h={68}><Grip /></ScrollThumb>
                    <Spacer />
                    <ScrollButton aria-label="Scroll down"><Arrow down /></ScrollButton>
                  </Scroll>
                </PaneBody>
              </SlidePane>
              <Splitter />
              <Main>
                <Stage>
                  <Canvas>
                    <Slide>
                      <Cover>
                        <CoverTitle dir="rtl">مروری بر تکنیک‌های استخراج جزئیات و<br />تفسیر خودکار تصویر<span>(AIA)</span></CoverTitle>
                      </Cover>
                      <BandArt />
                      <Author dir="rtl">سیامک احدی</Author>
                      <Pointer width="26" height="44" viewBox="0 0 26 44" aria-hidden="true">
                        <path d="M2 3v31l7-7 7 14 5-2-6-14h9z" fill="#fff" stroke="#3a3a40" strokeWidth="2" />
                      </Pointer>
                    </Slide>
                  </Canvas>
                  <Scroll>
                    <ScrollButton $h={34} aria-label="Scroll up"><Arrow /></ScrollButton>
                    <ScrollThumb $h={30}><Grip /></ScrollThumb>
                    <Spacer />
                    <ScrollButton aria-label="Scroll down"><Arrow down /></ScrollButton>
                    <ScrollButton $h={28} aria-label="Previous slide"><DoubleArrow /></ScrollButton>
                    <ScrollButton $h={28} aria-label="Next slide"><DoubleArrow down /></ScrollButton>
                    <ScrollButton as="span" $h={26} />
                  </Scroll>
                </Stage>
                <Notes>
                  <NotesBox aria-label="Notes" placeholder="Click to add notes" />
                  <NotesScroll>
                    <ScrollButton aria-label="Scroll notes up"><Arrow c="#8b9097" /></ScrollButton>
                    <ScrollButton aria-label="Scroll notes down"><Arrow down c="#8b9097" /></ScrollButton>
                  </NotesScroll>
                </Notes>
              </Main>
            </Work>

            <Foot>
              <FootCell $w={152}>Slide 1 of 16</FootCell>
              <FootCell $w={110}>"Urban"</FootCell>
              <FootCell $w={110}>Russian</FootCell>
              <ViewTools>
                <ViewButton $on aria-label="Normal view">{viewIcons.normal}</ViewButton>
                <ViewButton aria-label="Slide sorter">{viewIcons.sorter}</ViewButton>
                <ViewButton aria-label="Reading view">{viewIcons.reading}</ViewButton>
                <ViewButton aria-label="Slide show">{viewIcons.show}</ViewButton>
                <ZoomLabel htmlFor="zoom">34%</ZoomLabel>
                <ZoomGroup>
                  <RoundButton aria-label="Zoom out"><svg width="16" height="4" viewBox="0 0 16 4"><path d="M0 0h16v4H0z" fill="#66696f" /></svg></RoundButton>
                  <ZoomRange id="zoom" type="range" min={10} max={150} defaultValue={34} />
                  <RoundButton aria-label="Zoom in"><svg width="16" height="16" viewBox="0 0 16 16"><path d="M0 8h16M8 0v16" stroke="#55585e" strokeWidth="4" /></svg></RoundButton>
                  <FitButton aria-label="Fit to window"><FitIcon /></FitButton>
                </ZoomGroup>
              </ViewTools>
            </Foot>
          </Office>
        </Page>

        <SystemNav>
          <PlainButton aria-label="Expand" style={{ justifySelf: "start" }}>{KeyIcons.up}</PlainButton>
          <SystemKeys>
            <PlainButton aria-label="Back">{KeyIcons.back}</PlainButton>
            <PlainButton aria-label="Home">{KeyIcons.home}</PlainButton>
            <PlainButton aria-label="Recent apps">{KeyIcons.recent}</PlainButton>
          </SystemKeys>
        </SystemNav>
      </Screen>
    </>
  );
}
